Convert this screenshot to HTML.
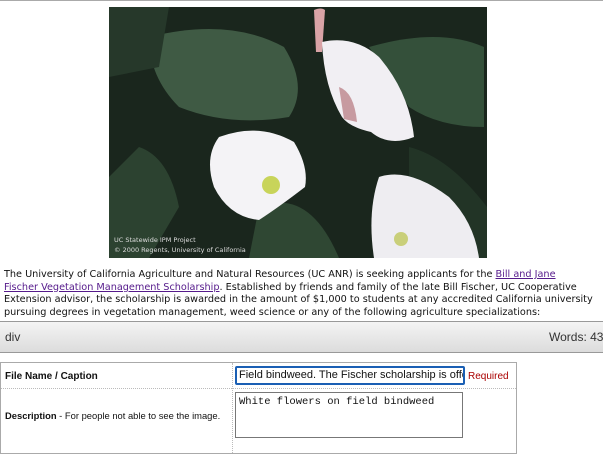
<!DOCTYPE html>
<html><head><style>
body{margin:0;width:603px;height:438px;overflow:hidden;background:#fff;position:relative;font-family:"DejaVu Sans",Verdana,sans-serif}
.top{position:absolute;left:0;top:0;width:603px;height:1px;background:#aaa}
.img{position:absolute;left:109px;top:7px;width:378px;height:251px}
.p{position:absolute;left:4px;top:269px;width:600px;font-size:9.7px;line-height:12.5px;color:#111;white-space:nowrap}
.p a{color:#551a8b}
.bar{position:absolute;left:0;top:321px;width:603px;height:30px;background:linear-gradient(#f4f4f4,#dcdcdc);border-top:1px solid #999;border-bottom:1px solid #999;font-family:"Liberation Sans",sans-serif;font-size:12px;color:#333}
.bar .l{position:absolute;left:5px;top:8px}.bar .r{position:absolute;left:549px;top:8px;white-space:nowrap}
.tbl{position:absolute;left:0;top:362px;width:515px;height:90px;border:1px solid #aaa;font-family:"Liberation Sans",sans-serif;font-size:10px;color:#111}
.sep{position:absolute;left:0;top:25px;width:515px;border-top:1px dotted #bbb}
.vsep{position:absolute;left:231px;top:0;height:90px;border-left:1px dotted #bbb}
.inp{position:absolute;left:234px;top:3px;width:224px;height:15px;border:2px solid #1a5fb4;border-radius:2px;font-size:11px;line-height:15px;padding-left:2px;overflow:hidden;white-space:nowrap}
.req{position:absolute;left:467px;top:8px;color:#a00;font-size:10px}
.ta{position:absolute;left:234px;top:29px;width:228px;height:46px;border:1px solid #777;font-family:"Liberation Mono",monospace;font-size:10.5px;padding:3px 0 0 3px;box-sizing:border-box}
</style></head><body>
<div class="top"></div>
<svg class="img" viewBox="0 0 378 251" preserveAspectRatio="none">
<rect width="378" height="251" fill="#1a261d"/>
<path d="M40 30 Q120 10 175 40 Q200 80 180 110 Q120 120 70 100 Q40 70 40 30Z" fill="#3f5a44"/>
<path d="M0 0 L60 0 L50 60 L0 70Z" fill="#26382a"/>
<path d="M260 40 Q330 20 375 40 L375 120 Q330 120 300 100Z" fill="#34503a"/>
<path d="M30 140 Q60 150 70 200 L40 251 L0 251 L0 170Z" fill="#2c4230"/>
<path d="M150 200 Q200 180 230 251 L140 251Z" fill="#2f4733"/>
<path d="M300 140 Q340 150 378 200 L378 251 L300 251Z" fill="#223426"/>
<path d="M205 3 Q212 0 216 3 L213 45 L207 45Z" fill="#d9a3a6"/>
<path d="M213 35 Q245 28 270 50 Q300 85 305 130 Q280 140 262 125 Q240 120 233 110 Q215 80 213 35Z" fill="#f1eff3"/>
<path d="M230 80 Q245 85 248 115 L235 112Z" fill="#c79aa0"/>
<path d="M110 130 Q150 115 185 135 Q200 160 196 180 Q170 200 150 213 Q120 210 105 180 Q95 150 110 130Z" fill="#f4f3f6"/>
<circle cx="162" cy="178" r="9" fill="#c8d45a"/>
<path d="M270 170 Q300 160 340 190 Q365 215 370 251 L265 251 Q258 205 270 170Z" fill="#eeedf1"/>
<circle cx="292" cy="232" r="7" fill="#c9cf7a"/>
<text x="5" y="235" font-family="DejaVu Sans,sans-serif" font-size="6.5" fill="#ddd">UC Statewide IPM Project</text>
<text x="5" y="245" font-family="DejaVu Sans,sans-serif" font-size="6.5" fill="#ddd">© 2000 Regents, University of California</text>
</svg>
<div class="p">The University of California Agriculture and Natural Resources (UC ANR) is seeking applicants for the <a href="#">Bill and Jane</a><br><a href="#">Fischer Vegetation Management Scholarship</a>. Established by friends and family of the late Bill Fischer, UC Cooperative<br>Extension advisor, the scholarship is awarded in the amount of $1,000 to students at any accredited California university<br>pursuing degrees in vegetation management, weed science or any of the following agriculture specializations:</div>
<div class="bar"><span class="l">div</span><span class="r">Words: 432</span></div>
<div class="tbl">
<div class="sep"></div><div class="vsep"></div>
<div style="position:absolute;left:4px;top:8px;font-weight:bold">File Name / Caption</div>
<div class="inp">Field bindweed. The Fischer scholarship is offered</div>
<div class="req">Required</div>
<div style="position:absolute;left:4px;top:47px;font-size:9.4px;white-space:nowrap"><b>Description</b> - For people not able to see the image.</div>
<div class="ta">White flowers on field bindweed</div>
</div>
</body></html>
